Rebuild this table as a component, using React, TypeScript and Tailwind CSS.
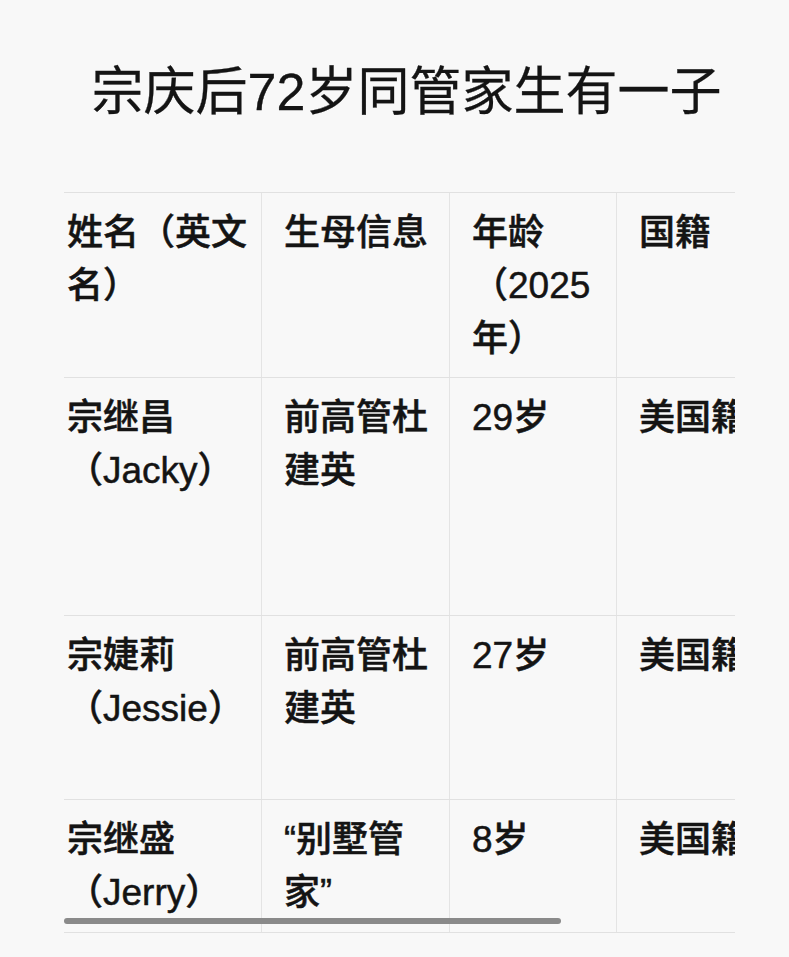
import React from "react";

const L = ({ children }: { children: React.ReactNode }) => (
  <span className="text-[37px]">{children}</span>
);

type Row = { h: string; cells: React.ReactNode[] };

const rows: Row[] = [
  {
    h: "h-[185px]",
    cells: [
      <>姓名（英文<br />名）</>,
      <>生母信息</>,
      <>年龄<br />（<L>2025</L><br />年）</>,
      <>国籍</>,
    ],
  },
  {
    h: "h-[238px]",
    cells: [
      <>宗继昌<br />（<L>Jacky</L>）</>,
      <>前高管杜<br />建英</>,
      <><L>29</L>岁</>,
      <>美国籍</>,
    ],
  },
  {
    h: "h-[184px]",
    cells: [
      <>宗婕莉<br />（<L>Jessie</L>）</>,
      <>前高管杜<br />建英</>,
      <><L>27</L>岁</>,
      <>美国籍</>,
    ],
  },
  {
    h: "h-[134px] border-b",
    cells: [
      <>宗继盛<br />（<L>Jerry</L>）</>,
      <>“别墅管<br />家”</>,
      <><L>8</L>岁</>,
      <>美国籍</>,
    ],
  },
];

export default function App() {
  return (
    <div
      className="w-[789px] h-[957px] overflow-hidden bg-[#f8f8f8] text-[#141414]"
      style={{ fontFamily: '"Liberation Sans", "Noto Sans CJK SC", sans-serif' }}
    >
      <h1
        className="pt-[60px] pl-[24px] text-center text-[52px] leading-[64px] font-normal whitespace-nowrap [-webkit-text-stroke:0.3px_#141414]"
      >
        宗庆后<span>72</span>岁同管家生有一子
      </h1>
      <div className="relative ml-[64px] mt-[68px] w-[671px] overflow-hidden">
        {rows.map((r, i) => (
          <div
            key={i}
            className={`grid grid-cols-[197px_188px_167px_200px] border-t border-[#e1e1e1] ${r.h}`}
          >
            {r.cells.map((c, j) => (
              <div
                key={j}
                className={`${j === 0 ? "pl-[3px]" : "pl-[22px] border-l border-[#e4e4e4]"} pt-[13px] text-[36px] leading-[53px] font-medium whitespace-nowrap [-webkit-text-stroke:0.5px_#141414]`}
              >
                {c}
              </div>
            ))}
          </div>
        ))}
        <div className="absolute left-0 top-[726px] h-[6px] w-[497px] rounded-full bg-[#8a8a8a]" />
      </div>
    </div>
  );
}
